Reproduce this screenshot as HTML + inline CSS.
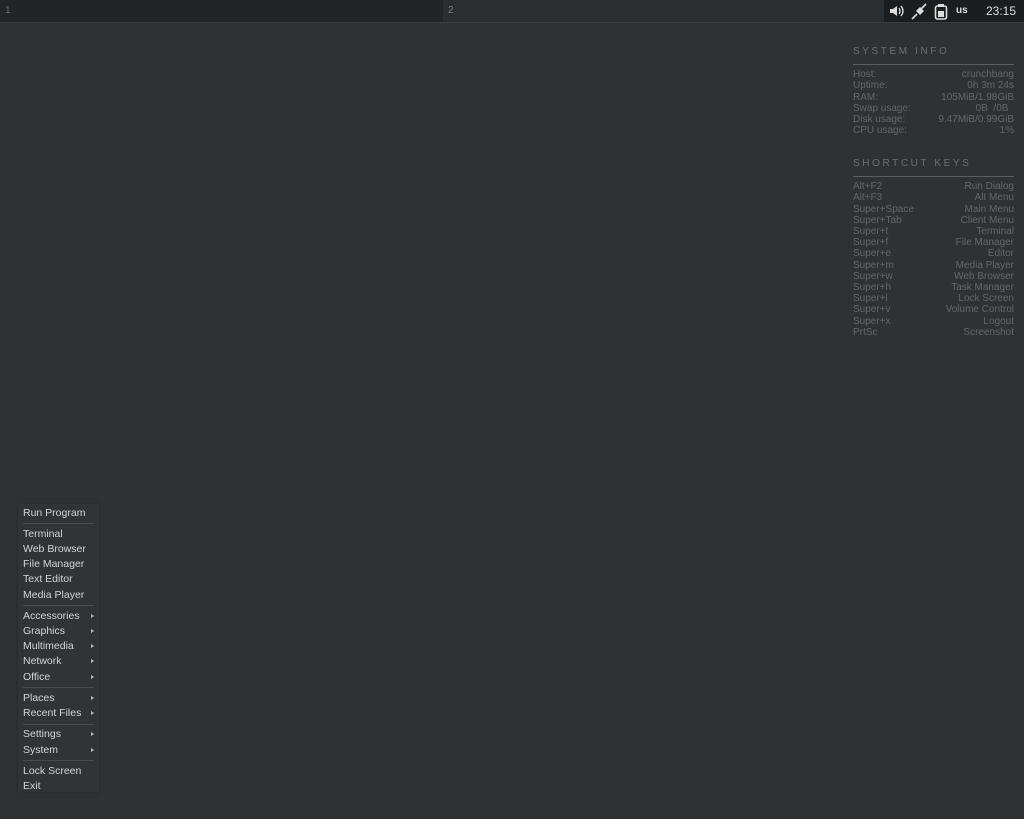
<!DOCTYPE html>
<html><head><style>
body{margin:0;width:1024px;height:819px;background:#2e3234;font-family:"Liberation Sans",sans-serif;position:relative;overflow:hidden}
.bar{position:absolute;top:0;left:0;width:1024px;height:22px;background:#1f2122;border-bottom:1px solid #3a3d3f}
.ws1{position:absolute;left:0;top:0;width:443px;height:22px;background:#222426;color:#6a6e70;font-size:10px;line-height:22px;padding-left:5px;box-sizing:border-box}
.ws2{position:absolute;left:443px;top:0;width:441px;height:22px;background:#2b2e30;color:#7a7e80;font-size:10px;line-height:22px;padding-left:5px;box-sizing:border-box}
.tray{position:absolute;left:884px;top:0;width:140px;height:22px;background:#1c1d1e;color:#ddd;font-size:12px}
.conky{position:absolute;left:853px;width:161px;color:#62676a;font-size:10px;line-height:11.2px}
.conky .h{letter-spacing:2.6px;font-size:10px;color:#6a6f72;border-bottom:1px solid #5a5f62;padding-bottom:7px;margin-bottom:4px}
.row{display:flex;justify-content:space-between}
.menu{position:absolute;left:18px;top:504px;width:81px;height:288px;background:#303437;box-shadow:0 0 2px #222}
.menu div.i{height:15.2px;line-height:15.2px;font-size:10.5px;color:#d2d4d5;padding-left:5px;position:relative}
.menu div.i.s::after{content:"";position:absolute;right:5px;top:5px;border-left:3px solid #bbb;border-top:2.5px solid transparent;border-bottom:2.5px solid transparent}
.sep{height:1px;background:#474b4e;margin:2.5px 5px 2.6px 5px}
</style></head><body>
<div class="bar"><div class="ws1">1</div><div class="ws2">2</div>
<div class="tray">
<svg style="position:absolute;left:5px;top:4px" width="16" height="14"><path d="M1 5h3l4-3v10l-4-3H1z" fill="#ddd"/><path d="M10 4q2 3 0 6M12 2q4 5 0 10" stroke="#ddd" fill="none" stroke-width="1.3"/></svg>
<svg style="position:absolute;left:26px;top:3px" width="18" height="17"><path d="M2 16l5-5M11 6l5-5" stroke="#ddd" stroke-width="1.6"/><path d="M6 8l4-4 4 4-4 4z" fill="#ddd"/></svg>
<svg style="position:absolute;left:50px;top:3px" width="14" height="17"><rect x="1.5" y="3" width="11" height="13" rx="2" fill="none" stroke="#ddd" stroke-width="1.6"/><rect x="4" y="1" width="6" height="3" fill="#ddd"/><rect x="4" y="8" width="6" height="6" fill="#ddd"/></svg>
<span style="position:absolute;left:72px;top:5px;font-size:10px;font-weight:bold">us</span>
<span style="position:absolute;left:102px;top:4px;font-size:12px">23:15</span>
</div></div>
<div class="conky" style="top:46px">
<div class="h">SYSTEM INFO</div>
<div class="row"><span>Host:</span><span>crunchbang</span></div>
<div class="row"><span>Uptime:</span><span>0h 3m 24s</span></div>
<div class="row"><span>RAM:</span><span>105MiB/1.98GiB</span></div>
<div class="row"><span>Swap usage:</span><span>0B &nbsp;/0B &nbsp;</span></div>
<div class="row"><span>Disk usage:</span><span>9.47MiB/0.99GiB</span></div>
<div class="row"><span>CPU usage:</span><span>1%</span></div>
</div>
<div class="conky" style="top:158px">
<div class="h">SHORTCUT KEYS</div>
<div class="row"><span>Alt+F2</span><span>Run Dialog</span></div>
<div class="row"><span>Alt+F3</span><span>Alt Menu</span></div>
<div class="row"><span>Super+Space</span><span>Main Menu</span></div>
<div class="row"><span>Super+Tab</span><span>Client Menu</span></div>
<div class="row"><span>Super+t</span><span>Terminal</span></div>
<div class="row"><span>Super+f</span><span>File Manager</span></div>
<div class="row"><span>Super+e</span><span>Editor</span></div>
<div class="row"><span>Super+m</span><span>Media Player</span></div>
<div class="row"><span>Super+w</span><span>Web Browser</span></div>
<div class="row"><span>Super+h</span><span>Task Manager</span></div>
<div class="row"><span>Super+l</span><span>Lock Screen</span></div>
<div class="row"><span>Super+v</span><span>Volume Control</span></div>
<div class="row"><span>Super+x</span><span>Logout</span></div>
<div class="row"><span>PrtSc</span><span>Screenshot</span></div>
</div>
<div class="menu">
<div style="height:1.5px"></div>
<div class="i">Run Program</div><div class="sep"></div>
<div class="i">Terminal</div><div class="i">Web Browser</div><div class="i">File Manager</div><div class="i">Text Editor</div><div class="i">Media Player</div><div class="sep"></div>
<div class="i s">Accessories</div><div class="i s">Graphics</div><div class="i s">Multimedia</div><div class="i s">Network</div><div class="i s">Office</div><div class="sep"></div>
<div class="i s">Places</div><div class="i s">Recent Files</div><div class="sep"></div>
<div class="i s">Settings</div><div class="i s">System</div><div class="sep"></div>
<div class="i">Lock Screen</div><div class="i">Exit</div>
</div>
</body></html>
